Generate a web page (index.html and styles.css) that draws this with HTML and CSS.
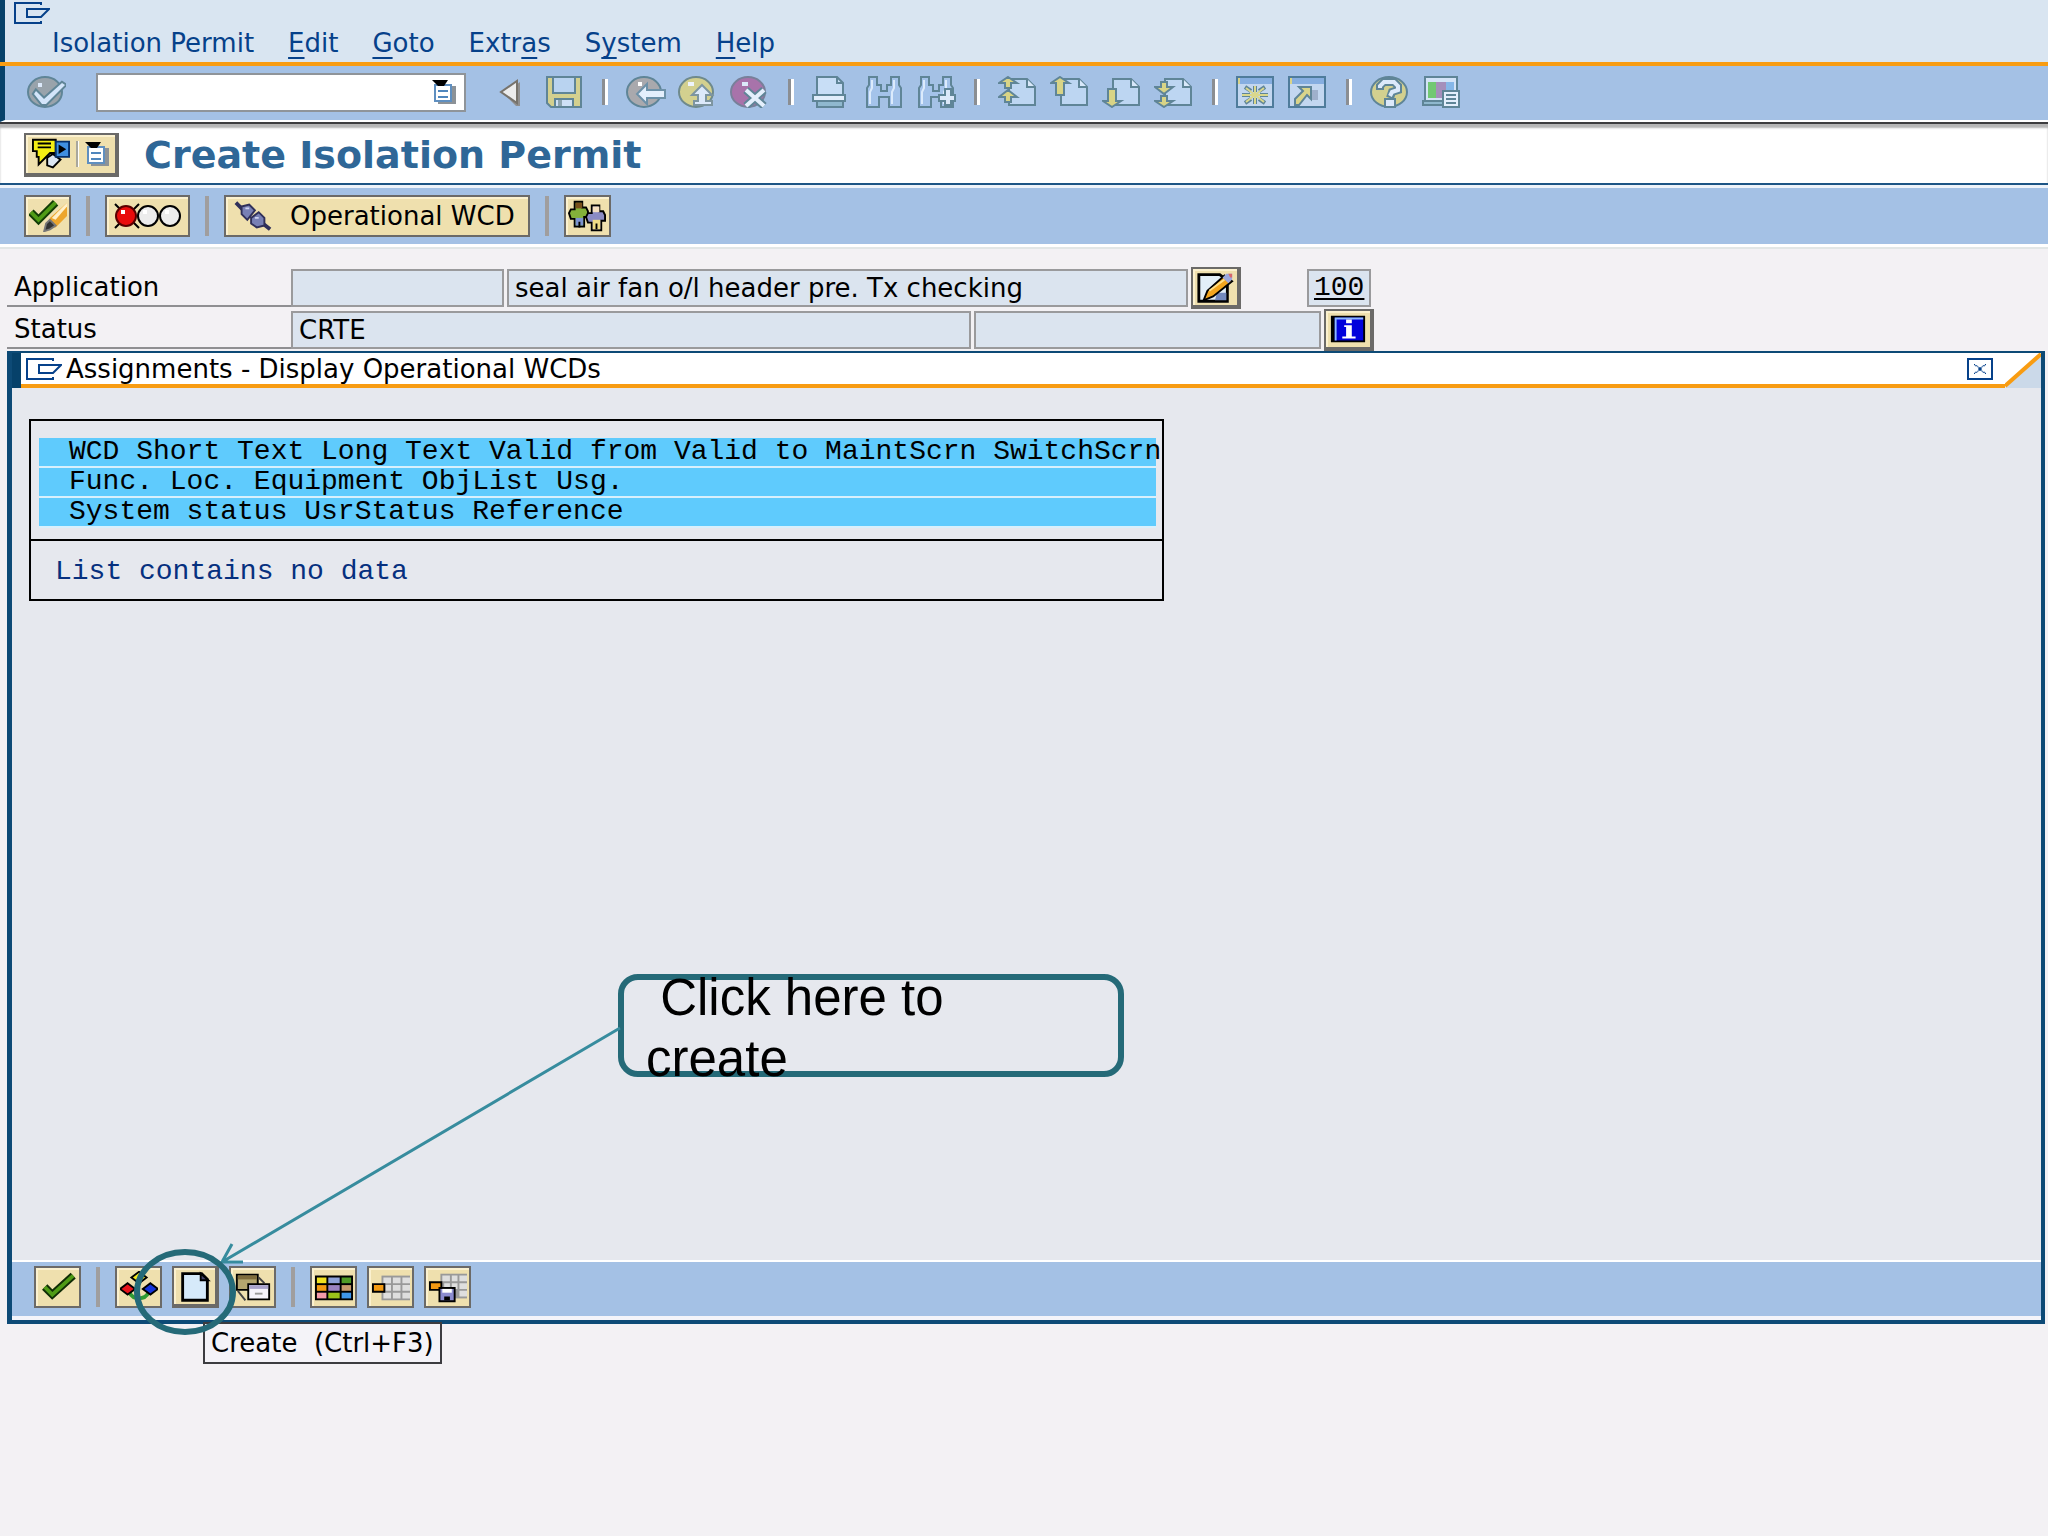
FILE: index.html
```html
<!DOCTYPE html>
<html lang="en">
<head>
    <meta charset="utf-8">
    <title>Create Isolation Permit</title>
    <link rel="stylesheet" href="styles.css">
</head>
<body>
    <!-- shared icon shapes -->
    <svg class="defs" width="0" height="0" aria-hidden="true">
        <symbol id="i-window" viewBox="0 0 18 11">
            <path d="M13.5 1.5V.5H.5V10.5H13.5V9.5M17.5 3.5H6.5V7.5H13.5Z" fill="none" stroke="#06418a"/>
        </symbol>
        <symbol id="i-list" viewBox="0 0 12 12">
            <path d="M3 3h9v9H3z" fill="#8c9297"/>
            <path d="M1.5 2.5h8v8h-8z" fill="#fff" stroke="#5f8fc0"/>
            <path d="M3 5.5h5M3 8.5h5" stroke="#4f86bd"/>
            <path d="M0 0h8L6 3H3z" fill="#000"/>
        </symbol>
        <symbol id="i-page" viewBox="0 0 20 16">
            <path d="M5.500 1.500H14.500L18.500 5.500V14.500H5.500Z" fill="#bdd6f2" stroke="#5f8597"/>
            <path d="M14.500 1.500V5.500H18.500" fill="#d8e8fa" stroke="#5f8597"/>
        </symbol>
        <symbol id="i-binoculars" viewBox="0 0 20 16">
            <path d="M2.500 .5H6.500V4.500H8.500V7.500H11.500V4.500H13.500V.5H17.500V4.500L18.500 6V15.500H12.500V10.500H7.500V15.500H1.500V6L2.500 4.500Z" fill="#a4c3ea" stroke="#5f8597"/>
            <path d="M4 2v4L3 8v6M15 2v4l-1 2v6" fill="none" stroke="#dcebfc"/>
        </symbol>
    </svg>

    <header>
        <div class="menu-area">
            <svg class="window-icon"><use href="#i-window"/></svg>
            <nav class="menu">
                <a href="#">Isolation Permit</a>
                <a href="#"><u>E</u>dit</a>
                <a href="#"><u>G</u>oto</a>
                <a href="#">Extr<u>a</u>s</a>
                <a href="#">S<u>y</u>stem</a>
                <a href="#"><u>H</u>elp</a>
            </nav>
        </div>

        <div class="toolbar">
            <button class="tool" aria-label="Enter">
                <svg viewBox="0 0 20 16"><ellipse cx="9.500" cy="8" rx="8.500" ry="7.500" fill="#99a3ab" stroke="#5f8597"/><path d="M5 7.500l4 4 9-8 1.500 1-9.500 9.500H8L4 9z" fill="#d3e5fa" stroke="#5f8597" stroke-width="2"/><path d="M5 7.500l4 4 9-8 1.500 1-9.500 9.500H8L4 9z" fill="#d3e5fa"/><path d="M6 4.500h2" stroke="#dce9fa" stroke-width="2"/></svg>
            </button>
            <div class="command">
                <input type="text" aria-label="Command">
                <button class="drop" aria-label="Command history"><svg><use href="#i-list"/></svg></button>
            </div>
            <button class="tool" aria-label="Collapse">
                <svg viewBox="0 0 20 16"><path d="M14 3v12h-2L6 9z" fill="#8f8f8f"/><path d="M12.500 2.500v11L4.500 8z" fill="#ececec" stroke="#77736c"/></svg>
            </button>
            <button class="tool" aria-label="Save">
                <svg viewBox="0 0 20 16"><path d="M1.500 .5h17v15h-15l-2-2z" fill="#d3d08f" stroke="#5f8597"/><path d="M4.500 .5h11v8h-11z" fill="#b9d3f0" stroke="#5f8597"/><path d="M5.500 11.500h9v4h-9z" fill="#cfe1f6" stroke="#5f8597"/><path d="M7 12h2v3H7z" fill="#8ea5b0"/></svg>
            </button>
            <span class="bar"></span>
            <button class="tool" aria-label="Back">
                <svg viewBox="0 0 20 16"><ellipse cx="9" cy="8" rx="8.500" ry="7.500" fill="#a9a9ad" stroke="#5f8597"/><path d="M5.500 9l5-5v3h9v4h-9v3z" fill="#e4effc" stroke="#6d91a8"/><path d="M6 4h2" stroke="#fff" stroke-width="2"/></svg>
            </button>
            <button class="tool" aria-label="Exit">
                <svg viewBox="0 0 20 16"><ellipse cx="9" cy="8" rx="8.500" ry="7.500" fill="#d3d08f" stroke="#6f8a8c"/><path d="M12 4.500l5 5h-3v3h3v2H8v-2h2v-3H7z" fill="#dce9fa" stroke="#7d95a0"/><path d="M5 4h3" stroke="#eef4fb" stroke-width="2"/></svg>
            </button>
            <button class="tool" aria-label="Cancel">
                <svg viewBox="0 0 20 16"><ellipse cx="9" cy="8" rx="8.500" ry="7.500" fill="#a873aa" stroke="#78809a"/><path d="M8 7l9 8M17 7l-9 8" stroke="#5f8597" stroke-width="4"/><path d="M8 7l9 8M17 7l-9 8" stroke="#e4effc" stroke-width="2"/><path d="M6 4h3" stroke="#dce9fa" stroke-width="2"/></svg>
            </button>
            <span class="bar"></span>
            <button class="tool" aria-label="Print">
                <svg viewBox="0 0 20 16"><path d="M2.500 9.500V.5h10l3 3v6z" fill="#c8def6" stroke="#5f8597"/><path d="M12.500 .5v3h3" fill="none" stroke="#5f8597"/><path d="M.5 9.500h16v3H.5z" fill="#e1edfa" stroke="#5f8597"/><path d="M2.500 12.500h13v3h-13z" fill="#8fb8ce" stroke="#5f8597"/></svg>
            </button>
            <button class="tool" aria-label="Find"><svg><use href="#i-binoculars"/></svg></button>
            <button class="tool" aria-label="Find next">
                <svg viewBox="0 0 20 16"><use href="#i-binoculars"/><path d="M16 6v9M11 11h9" stroke="#5f8597" stroke-width="4"/><path d="M16 7v7M12 11h7" stroke="#dce9fa" stroke-width="2"/></svg>
            </button>
            <span class="bar"></span>
            <button class="tool" aria-label="First page">
                <svg viewBox="0 0 20 16"><use href="#i-page"/><path d="M5 .5L9.500 3.500H6.500V6H3.500V3.500H.5ZM5 7L9.500 10.500H6.500V13H3.500V10.500H.5Z" fill="#d8d486" stroke="#5f8597"/></svg>
            </button>
            <button class="tool" aria-label="Previous page">
                <svg viewBox="0 0 20 16"><use href="#i-page"/><path d="M5 .5L9.500 3.500H7V9.500H3V3.500H.5Z" fill="#d8d486" stroke="#5f8597"/></svg>
            </button>
            <button class="tool" aria-label="Next page">
                <svg viewBox="0 0 20 16"><use href="#i-page"/><path d="M5 15.500L9.500 12.500H7V6.500H3V12.500H.5Z" fill="#d8d486" stroke="#5f8597"/></svg>
            </button>
            <button class="tool" aria-label="Last page">
                <svg viewBox="0 0 20 16"><use href="#i-page"/><path d="M5 9L9.500 5.500H6.500V3H3.500V5.500H.5ZM5 15.500L9.500 12.500H6.500V10H3.500V12.500H.5Z" fill="#d8d486" stroke="#5f8597"/></svg>
            </button>
            <span class="bar"></span>
            <button class="tool" aria-label="New session">
                <svg viewBox="0 0 20 16"><path d="M.5 .5h18v15H.5z" fill="#c3d7f0" stroke="#4f7c9b"/><path d="M1 1h17v3H1z" fill="#86aee0"/><path d="M1 1h1v3H1z" fill="#d9d48a"/><path d="M9.500 5v3M9.500 11v3M3 9.500h4M12 9.500h4M4.500 5.500l3 2M14.500 5.500l-3 2M4.500 13.500l3-2M14.500 13.500l-3-2" stroke="#5f8597" stroke-width="2"/><path d="M9.500 5v9M3 9.500h13M5 6l9 7M14 6l-9 7" stroke="#dad78c"/></svg>
            </button>
            <button class="tool" aria-label="Create shortcut">
                <svg viewBox="0 0 20 16"><path d="M.5 .5h18v15H.5z" fill="#c3d7f0" stroke="#4f7c9b"/><path d="M1 1h17v3H1z" fill="#86aee0"/><path d="M1 1h1v3H1z" fill="#d9d48a"/><path d="M12 7h3v5h-3z" fill="#9fb0cb"/><path d="M5.500 5.500h6v6l-2-2-4 5h-2v-3l4-4z" fill="#d9d48a" stroke="#5f8597"/></svg>
            </button>
            <span class="bar"></span>
            <button class="tool" aria-label="Help">
                <svg viewBox="0 0 20 16"><ellipse cx="9.500" cy="8" rx="9" ry="7.500" fill="#d3d08f" stroke="#5f8597"/><path d="M5 7V5l2-2h5l2 2v2l-3 1-1 3" fill="none" stroke="#5f8597" stroke-width="4"/><path d="M7.500 11.500h5v4h-5z" fill="#dce9fa" stroke="#5f8597"/><path d="M5 6V5l2-2h5l2 2v2l-3 1-1 2" fill="none" stroke="#dce9fa" stroke-width="2"/></svg>
            </button>
            <button class="tool" aria-label="Customize local layout">
                <svg viewBox="0 0 20 16"><path d="M1.500 .5h16v12h-16z" fill="#d4e4f7" stroke="#5f8597"/><path d="M3 3h4v8H3z" fill="#72c873"/><path d="M7 3h5v8H7z" fill="#a58fbb"/><path d="M12 3h4v8h-4z" fill="#86b7e8"/><path d="M.5 12.500h12v2H.5z" fill="#8fb8ce" stroke="#5f8597"/><path d="M10.500 7.500h8v8h-8z" fill="#e4effc" stroke="#5f8597"/><path d="M12 9.500h5M12 11.500h5M12 13.500h5" stroke="#5f8597"/></svg>
            </button>
        </div>
    </header>

    <div class="title-bar">
        <button class="btn raised services" aria-label="Services for object">
            <svg class="icon" viewBox="0 0 20 16"><path d="M8 10l3-2 4 3-4 4-3-1z" fill="#dce6f2" stroke="#000"/><path d="M.5 .5h12v7h-3l-6 6v-4h-1v-3h-2z" fill="#f5ee13" stroke="#000"/><path d="M3 2.500h7M3 4.500h7" stroke="#000"/><path d="M12.500 1.500h7v8h-7z" fill="#3f8fe0" stroke="#06306a"/><path d="M14 3l4 2.500-4 2.500z" fill="#000"/></svg>
            <span class="divider"></span>
            <svg class="list-icon"><use href="#i-list"/></svg>
        </button>
        <h1>Create Isolation Permit</h1>
    </div>

    <div class="app-bar">
        <button class="btn" aria-label="Check">
            <svg class="icon" viewBox="0 0 20 16"><path d="M1 6l4 4 9-9" fill="none" stroke="#123c06" stroke-width="4"/><path d="M1 6l4 4 9-9" fill="none" stroke="#4f9b16" stroke-width="2"/><path d="M11 9l9-8v7l-6 6h-3z" fill="#eda62c"/><path d="M12 9l8-8v2l-6 7z" fill="#fff0c8"/><path d="M11 10l3 3-3 2-3 1 1-4z" fill="#333" stroke="#777"/></svg>
        </button>
        <span class="sep"></span>
        <button class="btn lights" aria-label="Status">
            <svg viewBox="0 0 35 16"><circle cx="17.500" cy="8" r="5" fill="#ececec" stroke="#000"/><circle cx="28.500" cy="8" r="5" fill="#ececec" stroke="#000"/><path d="M1 2l12 12M13 2L1 14" stroke="#000"/><circle cx="6.500" cy="8" r="5" fill="#e90c0c" stroke="#5a0000"/><path d="M4 6h2M15 6h2M26 6h2" stroke="#fff" stroke-width="2"/></svg>
        </button>
        <span class="sep"></span>
        <button class="btn wide">
            <svg class="icon" viewBox="0 0 20 16"><path d="M1 1l4 4M14 11l5 4" stroke="#30305a" stroke-width="2"/><path d="M4 3l4-1 3 3-4 5-3-3zM9 9l4-3 3 3v4l-4 1-3-2z" fill="#7880b5" stroke="#30305a"/><path d="M6 4h2M11 9h2" stroke="#cdd2f0"/></svg>
            <span>Operational WCD</span>
        </button>
        <span class="sep"></span>
        <button class="btn" aria-label="Partners">
            <svg class="icon" viewBox="0 0 20 16"><path d="M3.500 .5h4v3h2l1 2v3h-2v5h-5v-4h-2l-1-3 1-2h2z" fill="#83b13a" stroke="#000"/><path d="M4 1h3.500v3H4z" fill="#79501b"/><path d="M4 9h4v4H4z" fill="#7c93cf"/><path d="M12.500 2.500h4v3h2l1 2v3h-2v5h-5v-4h-2l-1-3 1-2h2z" fill="#8b8bc4" stroke="#000"/><path d="M13 3h3.500v3H13z" fill="#f4dfc0"/><path d="M13 10h4v5h-4z" fill="#f0dc86"/><path d="M6 11v3M15 12v3" stroke="#000"/></svg>
        </button>
    </div>

    <form class="form">
        <div class="row">
            <label for="application">Application</label>
            <input class="field app-id" id="application" type="text" readonly>
            <input class="field app-text" type="text" aria-label="Application text" value="seal air fan o/l header pre. Tx checking" readonly>
            <button class="btn raised" type="button" aria-label="Long text">
                <svg class="icon" viewBox="0 0 20 16"><path d="M1.500 1.500h11l4 3v11h-15z" fill="#e3eff8" stroke="#000" stroke-width="1.500"/><path d="M11 11h5v4h-6z" fill="#7389bd"/><path d="M4 15l2-5 9-8 4 3-10 8z" fill="#f2a51f" stroke="#000"/><path d="M7 10l8-6" stroke="#ffe08a"/><path d="M14 3l2-2h3v3l-2 2z" fill="#9aa7df"/><path d="M17 1h2v2h-1z" fill="#d8676c"/></svg>
            </button>
            <a class="field number" href="#">100</a>
        </div>
        <div class="row">
            <label for="status">Status</label>
            <input class="field status" id="status" type="text" value="CRTE" readonly>
            <input class="field user-status" type="text" aria-label="User status" readonly>
            <button class="btn raised" type="button" aria-label="Status information">
                <svg class="icon" viewBox="0 0 20 16"><path d="M1 1h18v14H1z" fill="#000"/><path d="M3 2h15v12H3z" fill="#0202dc"/><path d="M3 2h15v1H4v11H3z" fill="#8cb8ff"/><path d="M9 3h3v2H9zM8 6h4v6h2v1H7v-1h2V7H8z" fill="#fff"/></svg>
            </button>
        </div>
    </form>

    <section class="popup">
        <div class="popup-title">
            <div class="popup-caption">
                <svg class="window-icon"><use href="#i-window"/></svg>
                <h2>Assignments - Display Operational WCDs</h2>
                <button class="close" aria-label="Close">
                    <svg viewBox="0 0 11 9"><path d="M0 0h1v1H0zM1 1h2v1H1zM3 2h1v1H3zM4 3h3v3H4zM7 2h1v1H7zM8 1h2v1H8zM10 0h1v1h-1zM3 6h1v1H3zM1 7h2v1H1zM0 8h1v1H0zM7 6h1v1H7zM8 7h2v1H8zM10 8h1v1h-1z" fill="#06418a"/></svg>
                </button>
            </div>
            <svg class="corner" viewBox="0 0 36 35"><path d="M0 0h36v35H0z" fill="#fff"/><path d="M0 35L36 1v34z" fill="#cbd9e9"/><path d="M0 33L36 1" stroke="#f89c12" stroke-width="4"/></svg>
        </div>

        <div class="popup-body">
            <table class="list">
                <thead>
                    <tr><th>
                        <div class="band">WCD Short Text Long Text Valid from Valid to MaintScrn SwitchScrn</div>
                        <div class="band">Func. Loc. Equipment ObjList Usg.</div>
                        <div class="band">System status UsrStatus Reference</div>
                    </th></tr>
                </thead>
                <tbody>
                    <tr><td>List contains no data</td></tr>
                </tbody>
            </table>
        </div>

        <div class="popup-bar">
            <button class="btn" aria-label="Continue">
                <svg class="icon" viewBox="0 0 20 16"><path d="M3 8l4 4L18 2" fill="none" stroke="#102d05" stroke-width="4"/><path d="M3 8l4 4L18 2" fill="none" stroke="#4f9b16" stroke-width="2"/></svg>
            </button>
            <span class="sep"></span>
            <button class="btn" aria-label="Assign">
                <svg class="icon" viewBox="0 0 20 16"><path d="M5 11c2 4 8 4 10 0" fill="none" stroke="#2f9a32" stroke-width="2"/><path d="M10 0l4 3-4 3-4-3z" fill="#f7ea20" stroke="#000"/><path d="M4 6l4 3-4 3-4-3z" fill="#e8141c" stroke="#000"/><path d="M16 6l4 3-4 3-4-3z" fill="#1334dc" stroke="#000"/></svg>
            </button>
            <button class="btn raised create" aria-label="Create">
                <svg class="icon" viewBox="0 0 20 16"><path d="M3.500 1.500h10l3 3v11h-13z" fill="#d6eafa" stroke="#000" stroke-width="1.500"/><path d="M13 1.500v3.500h4z" fill="#44446a" stroke="#000"/></svg>
            </button>
            <button class="btn" aria-label="Create with reference">
                <svg class="icon" viewBox="0 0 20 16"><path d="M1.500 1.500h11v8h-11z" fill="#b5a670" stroke="#000"/><path d="M2 2h10v2H2z" fill="#7f6c3c"/><path d="M2 10l4 5M13 3l3 3" stroke="#444"/><path d="M7.500 6.500h11v8h-11z" fill="#f5f3fb" stroke="#000"/><path d="M8 7h10v2H8z" fill="#a9a3cb"/><path d="M11 11.500h4" stroke="#999"/></svg>
            </button>
            <span class="sep"></span>
            <button class="btn" aria-label="Choose layout">
                <svg class="icon" viewBox="0 0 20 16"><path d="M0 2h20v13H0z" fill="#000"/><path d="M1 3h5v3H1z" fill="#f0e020"/><path d="M7 3h6v3H7z" fill="#8fa2d8"/><path d="M14 3h5v3h-5z" fill="#4f9b26"/><path d="M1 7h5v3H1z" fill="#f39a12"/><path d="M7 7h6v3H7z" fill="#9a82c0"/><path d="M14 7h5v3h-5z" fill="#c79a6c"/><path d="M1 11h5v3H1z" fill="#f59aa8"/><path d="M7 11h6v3H7z" fill="#9bc21a"/><path d="M14 11h5v3h-5z" fill="#3f97ea"/></svg>
            </button>
            <button class="btn" aria-label="Change layout">
                <svg class="icon" viewBox="0 0 20 16"><path d="M5 2h15v13H5z" fill="#999"/><path d="M6 3h4v3H6zM11 3h4v3h-4zM16 3h4v3h-4zM7 7h3v3H7zM11 7h4v3h-4zM16 7h4v3h-4zM6 11h4v3H6zM11 11h4v3h-4zM16 11h4v3h-4z" fill="#dedede"/><path d="M.5 6.500h6v4h-6z" fill="#f39a12" stroke="#000"/></svg>
            </button>
            <button class="btn" aria-label="Save layout">
                <svg class="icon" viewBox="0 0 20 16"><path d="M6 1h14v13H6z" fill="#999"/><path d="M7 2h4v3H7zM12 2h3v3h-3zM16 2h4v3h-4zM8 6h3v3H8zM12 6h3v3h-3zM16 6h4v3h-4zM16 10h4v3h-4z" fill="#dedede"/><path d="M.5 5.500h6v4h-6z" fill="#f39a12" stroke="#000"/><path d="M5.500 8.500h8v7h-8z" fill="#8c8cd0" stroke="#000"/><path d="M7 9h5v2H7z" fill="#fff"/><path d="M8 13h3v2H8z" fill="#000"/></svg>
            </button>
        </div>

        <div class="tooltip" role="tooltip">Create  (Ctrl+F3)</div>
        <div class="callout"> Click here to
create</div>
        <svg class="pointer" viewBox="0 0 520 320">
            <path d="M508 8L110 242M120 224L110 242L131 242" fill="none" stroke="#378c9e" stroke-width="3"/>
            <ellipse cx="73" cy="272" rx="48" ry="40" fill="none" stroke="#256a78" stroke-width="6"/>
        </svg>
    </section>
</body>
</html>
```
FILE: styles.css
```css
* {
    box-sizing: border-box;
}
body {
    margin: 0;
    min-height: 100vh;
    display: flex;
    flex-direction: column;
    background: #f3f1f4;
    color: #000;
    font-family: "DejaVu Sans", Verdana, sans-serif;
    font-size: 26px;
}
button, input {
    font: inherit;
    color: inherit;
    padding: 0;
    margin: 0;
}
svg {
    display: block;
}
.defs {
    position: absolute;
}

/* menu */
.menu-area {
    height: 66px;
    padding: 2px 0 0 9px;
    background: linear-gradient(to right, #06416a 5px, #d9e5f1 5px);
    border-bottom: 4px solid #f89c12;
}
.window-icon {
    width: 36px;
    height: 22px;
    margin-left: 5px;
}
.menu {
    display: flex;
    gap: 34px;
    padding-left: 43px;
    line-height: 38px;
}
.menu a {
    color: #06418a;
    text-decoration: none;
}
.menu u {
    text-underline-offset: 5px;
    text-decoration-thickness: 2px;
    text-decoration-skip-ink: none;
}

/* system toolbar */
.toolbar {
    display: flex;
    align-items: center;
    gap: 12px;
    height: 56px;
    padding: 0 0 2px 21px;
    background: #a4c1e5;
    border-left: 5px solid #06416a;
    border-bottom: 2px solid #fff;
}
.tool {
    width: 40px;
    height: 32px;
    background: none;
    border: none;
}
.tool svg {
    width: 40px;
    height: 32px;
}
.command {
    display: flex;
    align-items: center;
    width: 370px;
    height: 39px;
    margin: 0 14px 0 18px;
    padding-right: 8px;
    background: #fff;
    border: 2px solid #8f9499;
}
.command input {
    flex: 1;
    min-width: 0;
    height: 100%;
    padding-left: 6px;
    border: none;
    outline: none;
    background: none;
}
.drop {
    background: none;
    border: none;
}
.drop svg, .list-icon {
    width: 24px;
    height: 24px;
}
.bar {
    width: 6px;
    height: 26px;
    margin: 0 6px;
    background: linear-gradient(to right, #8b8e92 3px, #fff 3px);
}

/* title */
.title-bar {
    display: flex;
    align-items: center;
    gap: 25px;
    height: 63px;
    padding: 2px 24px 0;
    background: #fff;
    border-top: 2px solid #3c3c3e;
    border-bottom: 2px solid #1d5585;
    box-shadow: inset 0 4px 2px #b5b5b5;
}
h1 {
    margin: 0;
    font-size: 38px;
    line-height: 44px;
    color: #2f6797;
}
.btn {
    display: flex;
    align-items: center;
    justify-content: center;
    width: 47px;
    height: 42px;
    background: #efe0ae;
    border: 2px solid #6b6a68;
    box-shadow: inset 2px 2px 0 #fbf1cf;
}
.icon {
    flex: none;
    width: 38px;
    height: 32px;
}
.raised {
    width: 50px;
    border-right-width: 4px;
    border-bottom-width: 4px;
}
.services {
    gap: 6px;
    width: 95px;
    height: 44px;
}
.divider {
    width: 3px;
    height: 26px;
    border-left: 2px solid #a9a79c;
    border-right: 1px solid #fff;
}

/* application toolbar */
.app-bar {
    display: flex;
    align-items: center;
    gap: 10px;
    height: 62px;
    padding: 0 24px;
    background: #a4c1e5;
    border-top: 3px solid #eef3fa;
    border-bottom: 3px solid #fff;
}
.sep {
    width: 4px;
    height: 40px;
    margin: 0 5px;
    background: #a09e9e;
}
.lights {
    width: 85px;
}
.lights svg {
    width: 70px;
    height: 32px;
}
.wide {
    width: auto;
    gap: 18px;
    padding: 0 13px 0 8px;
}

/* form */
.form {
    padding: 18px 0 0 7px;
    border-top: 2px solid #e2e6e6;
}
.row {
    display: flex;
    align-items: center;
    gap: 3px;
    height: 42px;
}
.row label {
    width: 284px;
    height: 38px;
    margin-right: -3px;
    padding-left: 7px;
    line-height: 36px;
    border-bottom: 2px solid #8f8f92;
}
.field {
    height: 38px;
    padding: 0 6px;
    background: #dbe4ef;
    border: 2px solid #9a9a9c;
    outline: none;
}
.app-id {
    width: 213px;
}
.app-text {
    width: 681px;
}
.number {
    width: 64px;
    margin-left: 63px;
    padding: 0 5px;
    font-family: "Liberation Mono", monospace;
    font-size: 28px;
    line-height: 34px;
    color: #000;
    text-underline-offset: 3px;
    text-decoration-thickness: 2px;
}
.status {
    width: 680px;
}
.user-status {
    width: 347px;
}

/* popup window */
.popup {
    position: relative;
    flex: 1;
    display: flex;
    flex-direction: column;
    margin: 0 3px 212px 7px;
    background: #e6e8ee;
    border: 4px solid #0d4a76;
    border-top-width: 2px;
    border-left-width: 5px;
}
.popup-title {
    display: flex;
    height: 35px;
    border-left: 9px solid #06416a;
}
.popup-caption {
    flex: 1;
    display: flex;
    align-items: center;
    background: #fff;
    border-bottom: 4px solid #f89c12;
}
h2 {
    flex: 1;
    margin: 0 0 0 4px;
    font-size: 26px;
    font-weight: normal;
    line-height: 30px;
}
.close {
    display: flex;
    align-items: center;
    justify-content: center;
    width: 26px;
    height: 22px;
    margin-right: 12px;
    background: #fff;
    border: 2px solid #06418a;
}
.close svg {
    width: 12px;
    height: 10px;
}
.corner {
    width: 36px;
    height: 35px;
}
.popup-body {
    flex: 1;
    padding: 31px 17px;
}
.list {
    table-layout: fixed;
    width: 1135px;
    border: 2px solid #000;
    border-collapse: collapse;
    font-family: "Liberation Mono", monospace;
    font-size: 28px;
    line-height: 28px;
}
.list th {
    padding: 17px 6px 11px 8px;
    font-weight: normal;
    text-align: left;
}
.list td {
    height: 60px;
    padding: 4px 24px 0;
    border-top: 2px solid #000;
    color: #06307f;
}
.band {
    padding-left: 30px;
    background: #5fcbfd;
    border-bottom: 2px solid #d8f0fc;
    white-space: nowrap;
}
.popup-bar {
    display: flex;
    align-items: center;
    gap: 10px;
    height: 60px;
    padding: 0 22px 4px;
    background: #a4c1e5;
    border-top: 2px solid #fff;
    border-bottom: 4px solid #f3f4fa;
}
.create {
    width: 47px;
}

/* notes over the popup */
.tooltip {
    position: absolute;
    left: 191px;
    top: 100%;
    margin-top: 2px;
    padding: 0 6px;
    line-height: 38px;
    white-space: pre;
    background: #f4f3f8;
    border: 2px solid #3c3c40;
}
.callout {
    position: absolute;
    left: 606px;
    bottom: 243px;
    display: flex;
    align-items: center;
    width: 506px;
    height: 103px;
    padding: 4px 0 0 22px;
    border: 6px solid #256a78;
    border-radius: 20px;
    font-family: "Liberation Sans", Arial, sans-serif;
    font-size: 51px;
    line-height: 61px;
    white-space: pre;
}
.pointer {
    position: absolute;
    left: 100px;
    bottom: -20px;
    width: 520px;
    height: 320px;
    pointer-events: none;
}
```
